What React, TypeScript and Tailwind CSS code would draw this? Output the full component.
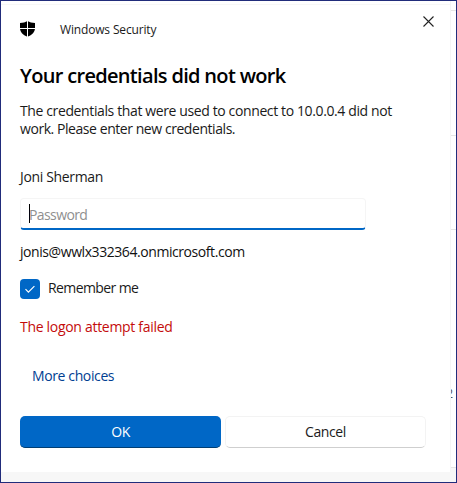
import React from 'react';

function Shield() {
  return (
    <svg width="15" height="16" viewBox="0 0 15 16" className="block">
      <path d="M7.500 0C5.600 1.300 2.800 2 0 2v5c0 4 2.800 7.200 7.500 8.800C12.200 14.200 15 11 15 7V2c-2.800 0-5.600-.7-7.500-2Z" fill="#000" />
      <path d="M7.500 0v16M0 7.500h15" stroke="#fff" strokeWidth="1" />
    </svg>
  );
}

function Close() {
  return (
    <svg width="11" height="11" viewBox="0 0 11 11" className="block">
      <path d="M.5.5l10 10M10.500.5l-10 10" stroke="#222" strokeWidth="1.100" />
    </svg>
  );
}

export default function App() {
  return (
    <div className="flex h-[483px] w-[457px] flex-col overflow-hidden border border-[#212c7b] bg-[#f7f7f7] font-['Open_Sans','Noto_Sans',sans-serif] text-[14px] leading-[18px] text-[#1a1a1a]">
      <div className="flex h-[471px]">
        <main className="flex h-[471px] w-[450px] flex-col border-r border-[#f5f5f5] bg-white pl-[19px]">
          <div className="h-[3px] w-full" />
          <div className="-ml-[19px] h-px w-[449px] bg-[#f7f7f7]" />
          <header className="flex h-[50px] w-[430px] items-start">
            <div className="pt-[16px]"><Shield /></div>
            <span className="ml-[25px] pt-4 text-[12px] tracking-[-0.16px] whitespace-nowrap">Windows Security</span>
            <div className="mr-[16px] ml-auto pt-[11px]"><Close /></div>
          </header>
          <h1 className="mt-2 h-[26px] text-[20px] leading-[26px] font-semibold tracking-[-0.68px] whitespace-nowrap text-black">Your credentials did not work</h1>
          <p className="mt-[13px] whitespace-nowrap">
            <span className="block tracking-[-0.38px]">The credentials that were used to connect to 10.0.0.4 did not</span>
            <span className="block tracking-[-0.44px]">work. Please enter new credentials.</span>
          </p>
          <div className="mt-[30px] tracking-[-0.34px]">Joni Sherman</div>
          <div className="mt-3 flex h-8 w-[346px] items-center overflow-hidden rounded-[4px] border border-b-2 border-[#f5f5f5] border-b-[#0067c6] pl-2">
            <span className="h-[19px] w-px bg-black" />
            <span className="-ml-px pt-[2px] tracking-[-0.6px] text-[#8f8f8f]">Password</span>
          </div>
          <div className="mt-[13px] tracking-[-0.43px] text-[#111]">jonis@wwlx332364.onmicrosoft.com</div>
          <label className="mt-[18px] flex h-5 items-center">
            <span className="flex h-5 w-5 items-center justify-center rounded-[4px] bg-[#0067c6]">
              <svg width="12" height="12" viewBox="0 0 12 12"><path d="M1.500 6.200l2.900 2.900 6-6" fill="none" stroke="#fff" strokeWidth="1.200" /></svg>
            </span>
            <span className="ml-2 pb-[2px] tracking-[-0.6px]">Remember me</span>
          </label>
          <div className="mt-[19px] tracking-[-0.3px] text-[#c40b0b]">The logon attempt failed</div>
          <div className="mt-[31px] ml-3 tracking-[-0.38px] text-[#003e92]">More choices</div>
          <div className="mt-[31px] flex gap-1">
            <button className="h-8 w-[201px] rounded-[5px] border-b border-[#003e73] bg-[#0067c6] tracking-[-0.6px] text-white">OK</button>
            <button className="h-8 w-[201px] rounded-[5px] border border-[#f3f3f3] border-b-[#cfcfcf] bg-white tracking-[-0.36px]">Cancel</button>
          </div>
        </main>
        <aside className="flex h-[467px] w-[5px] flex-col border-b border-[#e5e5e5] bg-white">
          <div className="mt-[9px] h-px bg-[#e5e5e5]" />
          <div className="mt-[124px] h-px bg-[#e5e5e5]" />
          <div className="mt-[93px] h-px bg-[#e5e5e5]" />
          <div className="mt-[157px] flex h-[14px] w-[2px] justify-end overflow-hidden text-[12px] leading-[14px] text-[#555]">2</div>
        </aside>
      </div>
    </div>
  );
}
